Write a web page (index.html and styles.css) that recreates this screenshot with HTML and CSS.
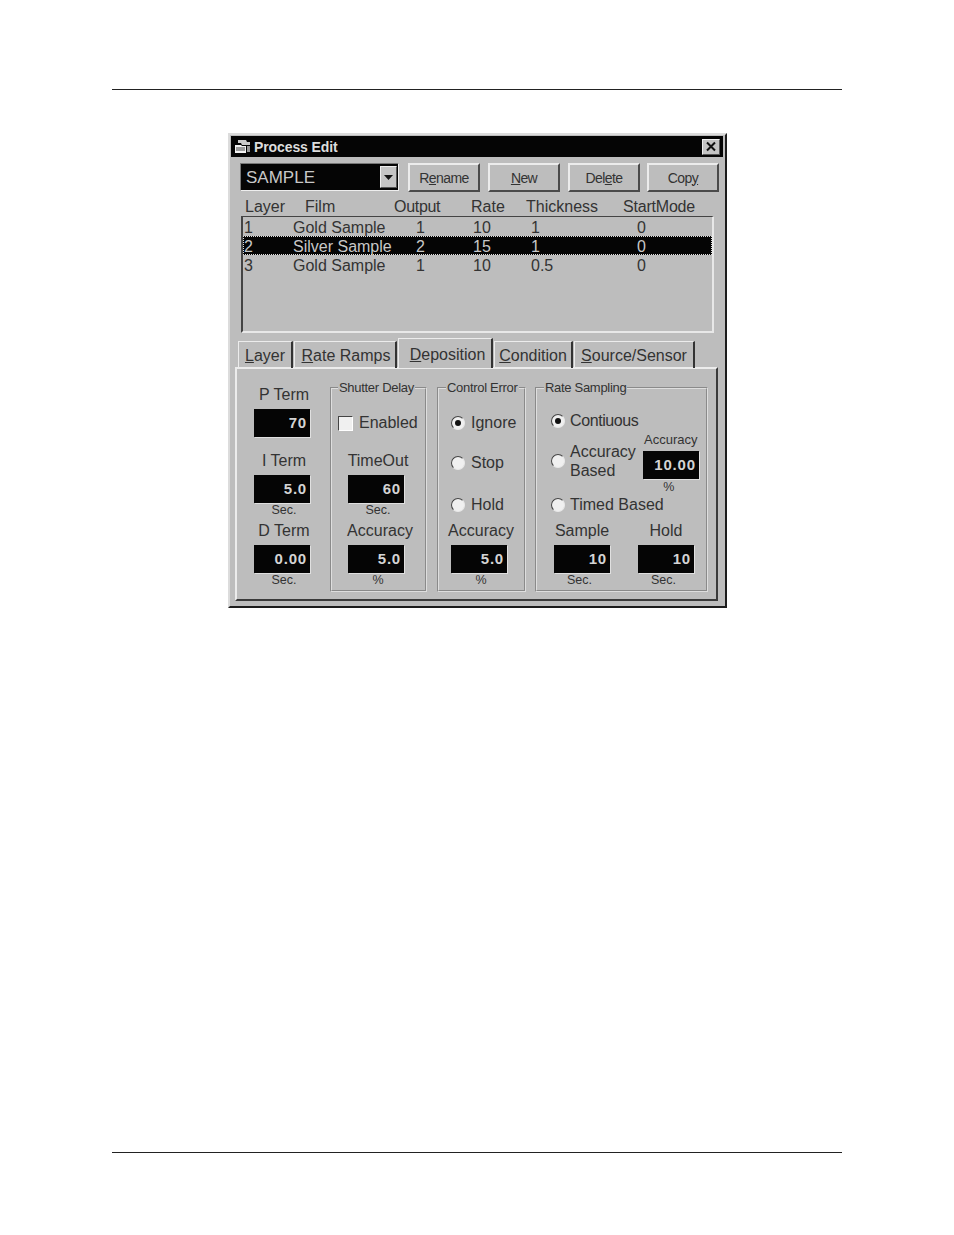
FILE: index.html
```html
<!DOCTYPE html>
<html lang="en">
<head>
    <meta charset="UTF-8">
    <title>Process Edit</title>
    <link rel="stylesheet" href="styles.css">
</head>
<body>
    <div class="page-rule top"></div>

    <div class="window">
        <div class="title-bar">
            <svg class="title-icon" width="17" height="15" viewBox="0 0 17 15">
                <path d="M4 1h8l1 2h3v3H8L7 4H4z" fill="#ccc"/>
                <path d="M1 6h6l1 1h4v7H1z" fill="#f2f2f2"/>
                <path d="M2 9h9M2 11h9" stroke="#444" stroke-width="1"/>
                <path d="M13 7h3v6h-3z" fill="#999"/>
            </svg>
            <span class="title-text">Process Edit</span>
            <div class="close-btn">
                <svg width="12" height="11" viewBox="0 0 12 11">
                    <path d="M2 1.5l8 8M10 1.5l-8 8" stroke="#111" stroke-width="2"/>
                </svg>
            </div>
        </div>

        <div class="toolbar">
            <div class="combo">
                <span>SAMPLE</span>
                <div class="combo-arrow">
                    <svg width="9" height="5" viewBox="0 0 9 5"><path d="M0 0h9L4.5 5z" fill="#111"/></svg>
                </div>
            </div>
            <div class="btn">R<u>e</u>name</div>
            <div class="btn"><u>N</u>ew</div>
            <div class="btn">Del<u>e</u>te</div>
            <div class="btn">Cop<u>y</u></div>
        </div>

        <div class="list-head">
            <span class="h-layer">Layer</span>
            <span class="h-film">Film</span>
            <span class="h-output">Output</span>
            <span class="h-rate">Rate</span>
            <span class="h-thick">Thickness</span>
            <span class="h-mode">StartMode</span>
        </div>

        <div class="list">
            <div class="list-row">
                <span class="c-layer">1</span><span class="c-film">Gold Sample</span><span class="c-output">1</span><span class="c-rate">10</span><span class="c-thick">1</span><span class="c-mode">0</span>
            </div>
            <div class="list-row selected">
                <span class="c-layer">2</span><span class="c-film">Silver Sample</span><span class="c-output">2</span><span class="c-rate">15</span><span class="c-thick">1</span><span class="c-mode">0</span>
            </div>
            <div class="list-row">
                <span class="c-layer">3</span><span class="c-film">Gold Sample</span><span class="c-output">1</span><span class="c-rate">10</span><span class="c-thick">0.5</span><span class="c-mode">0</span>
            </div>
        </div>

        <div class="tabs">
            <div class="tab t-layer"><u>L</u>ayer</div>
            <div class="tab t-ramps"><u>R</u>ate Ramps</div>
            <div class="tab t-depo active"><u>D</u>eposition</div>
            <div class="tab t-cond"><u>C</u>ondition</div>
            <div class="tab t-source"><u>S</u>ource/Sensor</div>
        </div>

        <div class="panel">
            <div class="term-col">
                <div class="field no-unit">
                    <div class="field-label">P Term</div>
                    <div class="value">70</div>
                </div>
                <div class="field">
                    <div class="field-label">I Term</div>
                    <div class="value">5.0</div>
                    <div class="unit">Sec.</div>
                </div>
                <div class="field">
                    <div class="field-label">D Term</div>
                    <div class="value">0.00</div>
                    <div class="unit">Sec.</div>
                </div>
            </div>

            <fieldset class="group shutter">
                <legend>Shutter Delay</legend>
                <div class="opt check-opt"><span class="check"></span>Enabled</div>
                <div class="field timeout">
                    <div class="field-label">TimeOut</div>
                    <div class="value">60</div>
                    <div class="unit">Sec.</div>
                </div>
                <div class="field wide-label">
                    <div class="field-label">Accuracy</div>
                    <div class="value">5.0</div>
                    <div class="unit">%</div>
                </div>
            </fieldset>

            <fieldset class="group control">
                <legend>Control Error</legend>
                <div class="opt first"><span class="radio on"></span>Ignore</div>
                <div class="opt stop"><span class="radio"></span>Stop</div>
                <div class="opt hold"><span class="radio"></span>Hold</div>
                <div class="field">
                    <div class="field-label">Accuracy</div>
                    <div class="value">5.0</div>
                    <div class="unit">%</div>
                </div>
            </fieldset>

            <fieldset class="group sampling">
                <legend>Rate Sampling</legend>
                <div class="opt first"><span class="radio on"></span>Contiuous</div>
                <div class="acc-row">
                    <div class="opt acc-opt"><span class="radio"></span><span>Accuracy<br>Based</span></div>
                    <div class="field small">
                        <div class="field-label">Accuracy</div>
                        <div class="value">10.00</div>
                        <div class="unit">%</div>
                    </div>
                </div>
                <div class="opt timed"><span class="radio"></span>Timed Based</div>
                <div class="pair">
                    <div class="field">
                        <div class="field-label">Sample</div>
                        <div class="value">10</div>
                        <div class="unit">Sec.</div>
                    </div>
                    <div class="field">
                        <div class="field-label">Hold</div>
                        <div class="value">10</div>
                        <div class="unit">Sec.</div>
                    </div>
                </div>
            </fieldset>
        </div>
    </div>

    <div class="page-rule bottom"></div>
</body>
</html>
```

FILE: styles.css
```css
* {
    box-sizing: border-box;
}

body {
    margin: 0;
    background: #fff;
    font-family: "Liberation Sans", Arial, sans-serif;
    font-size: 16px;
    color: #333;
}

.page-rule {
    height: 1px;
    margin: 0 112px;
    background: #222;
}

.page-rule.top {
    margin-top: 89px;
}

.page-rule.bottom {
    margin-top: 544px;
}

.window {
    width: 499px;
    height: 475px;
    margin: 43px 0 0 228px;
    padding: 1px;
    background: #bdbdbd;
    border: 2px solid;
    border-color: #dcdcdc #1c1c1c #1c1c1c #dcdcdc;
}

.title-bar {
    display: flex;
    align-items: center;
    height: 21px;
    margin-right: 1px;
    padding: 0 3px;
    background: #050505;
    color: #ddd;
}

.title-icon {
    flex: none;
}

.title-text {
    margin-left: 3px;
    font-size: 14px;
    font-weight: bold;
    letter-spacing: -0.1px;
}

.close-btn {
    display: flex;
    align-items: center;
    justify-content: center;
    width: 18px;
    height: 16px;
    margin-left: auto;
    background: #c4c4c4;
    border: 1px solid;
    border-color: #eee #555 #555 #eee;
}

.toolbar {
    display: flex;
    margin: 6px 0 0 9px;
}

.combo {
    display: flex;
    align-items: center;
    justify-content: space-between;
    width: 159px;
    height: 28px;
    padding: 0 1px 0 5px;
    background: #050505;
    border: 1px solid;
    border-color: #777 #eee #eee #777;
    color: #c8c8c8;
    font-size: 17px;
}

.combo span {
    padding-top: 1px;
}

.combo-arrow {
    display: flex;
    align-items: center;
    justify-content: center;
    width: 17px;
    height: 22px;
    background: #c4c4c4;
    border: 1px solid;
    border-color: #eee #555 #555 #eee;
}

.btn {
    display: flex;
    align-items: center;
    justify-content: center;
    width: 72px;
    height: 29px;
    margin-left: 8px;
    background: #bdbdbd;
    border: 2px solid;
    border-color: #ececec #4a4a4a #4a4a4a #ececec;
    font-size: 14px;
    letter-spacing: -0.6px;
}

.combo + .btn {
    margin-left: 9px;
}

.btn:last-child {
    margin-left: 7px;
}

.list-head {
    display: flex;
    height: 24px;
    align-items: flex-end;
    padding-left: 14px;
    line-height: 19px;
    white-space: nowrap;
}

.list-head span {
    flex: none;
}

.h-layer { width: 60px; }
.h-film { width: 89px; }
.h-output { width: 77px; letter-spacing: -0.3px; }
.h-rate { width: 55px; }
.h-thick { width: 97px; }
.h-mode { letter-spacing: -0.2px; }

.list {
    width: 473px;
    height: 117px;
    margin-left: 10px;
    border: solid;
    border-width: 1px 2px 2px 2px;
    border-color: #444 #e8e8e8 #e8e8e8 #444;
}

.list-row {
    display: flex;
    height: 19px;
    padding: 1px 0 0 1px;
    line-height: 19px;
    white-space: nowrap;
}

.list-row span {
    flex: none;
}

.list-row.selected {
    background: #050505;
    color: #c8c8c8;
    outline: 1px dotted #ddd;
    outline-offset: -1px;
}

.c-layer { width: 49px; }
.c-film { width: 123px; }
.c-output { width: 57px; }
.c-rate { width: 58px; }
.c-thick { width: 106px; }

.tabs {
    display: flex;
    align-items: flex-end;
    height: 30px;
    margin: 5px 0 -1px 7px;
}

.tab {
    position: relative;
    height: 27px;
    margin-right: 1px;
    padding-top: 3px;
    border: solid #bdbdbd;
    border-width: 1px 2px 0 1px;
    border-color: #ececec #333 transparent #ececec;
    text-align: center;
    line-height: 21px;
    white-space: nowrap;
}

.t-layer { width: 55px; }
.t-ramps { width: 103px; padding-left: 2px; }
.t-cond { width: 79px; }
.t-source { width: 121px; }

.tab.active {
    z-index: 1;
    width: 95px;
    height: 30px;
    padding: 5px 0 0 5px;
    background: #bdbdbd;
}

.panel {
    display: flex;
    width: 483px;
    height: 234px;
    margin-left: 4px;
    border: 2px solid;
    border-color: #ececec #3a3a3a #3a3a3a #ececec;
}

.term-col {
    flex: none;
    width: 56px;
    margin: 15px 0 0 17px;
}

.group {
    flex: none;
    min-width: 0;
    height: 212px;
    margin: 11px 0 0;
    padding: 0;
    border: 2px groove #dedede;
}

.group legend {
    height: 16px;
    padding: 0 1px;
    font-size: 13px;
    line-height: 16px;
    letter-spacing: -0.3px;
    white-space: nowrap;
}

.shutter {
    width: 97px;
    margin-left: 20px;
    padding-left: 16px;
}

.shutter legend {
    margin-left: -10px;
}

.control {
    width: 89px;
    margin-left: 10px;
    padding-left: 12px;
}

.control legend {
    margin-left: -5px;
}

.sampling {
    width: 173px;
    margin-left: 9px;
    padding-left: 17px;
}

.sampling legend {
    margin-left: -10px;
}

.field {
    display: flex;
    flex-direction: column;
    align-items: center;
    width: 56px;
    margin-top: 3px;
}

.field.no-unit {
    margin-top: 0;
    margin-bottom: 13px;
}

.field-label {
    height: 21px;
    margin-bottom: 4px;
    padding-left: 4px;
    line-height: 21px;
    white-space: nowrap;
}

.wide-label .field-label {
    padding-left: 8px;
}

.value {
    width: 56px;
    height: 28px;
    padding-right: 3px;
    background: #050505;
    box-shadow: 1px 1px 0 #e0e0e0;
    color: #d4d4d4;
    font-size: 15px;
    font-weight: bold;
    letter-spacing: 0.8px;
    line-height: 28px;
    text-align: right;
}

.unit {
    height: 14px;
    padding-left: 4px;
    font-size: 12.5px;
    line-height: 14px;
}

.opt {
    display: flex;
    align-items: center;
    gap: 5px;
    height: 20px;
    white-space: nowrap;
}

.radio {
    flex: none;
    position: relative;
    width: 14px;
    height: 14px;
    background: #f0f0f0;
    border-radius: 50%;
    border: 1px solid;
    border-color: #444 #e8e8e8 #e8e8e8 #444;
}

.radio.on::after {
    content: "";
    position: absolute;
    left: 3px;
    top: 3px;
    width: 6px;
    height: 6px;
    background: #111;
    border-radius: 50%;
}

.check {
    flex: none;
    width: 15px;
    height: 15px;
    background: #f0f0f0;
    border: 1px solid;
    border-color: #444 #fff #fff #444;
}

.check-opt {
    margin: 17px 0 0 -10px;
    gap: 6px;
}

.timeout {
    margin-top: 17px;
}

.control .opt {
    gap: 6px;
}

.control .first {
    margin-top: 17px;
}

.stop {
    margin-top: 20px;
}

.hold {
    margin-top: 22px;
}

.control .field {
    margin-top: 5px;
}

.sampling .opt {
    margin-left: -3px;
}

.sampling .first {
    margin-top: 15px;
    letter-spacing: -0.4px;
}

.acc-row {
    display: flex;
    align-items: flex-start;
    height: 61px;
    margin-top: 2px;
}

.sampling .acc-opt {
    height: 38px;
    margin-top: 9px;
    line-height: 19px;
}

.field.small {
    margin: 0 0 0 7px;
}

.small .field-label {
    height: 14px;
    padding-left: 0;
    font-size: 13px;
    line-height: 14px;
}

.small .unit {
    margin-top: 1px;
    padding: 0 4px 0 0;
}

.timed {
    margin-top: 1px;
}

.pair {
    display: flex;
    gap: 28px;
    margin-top: 2px;
}

.pair .field-label {
    padding-left: 0;
}

.pair .unit {
    padding: 0 5px 0 0;
}
```
